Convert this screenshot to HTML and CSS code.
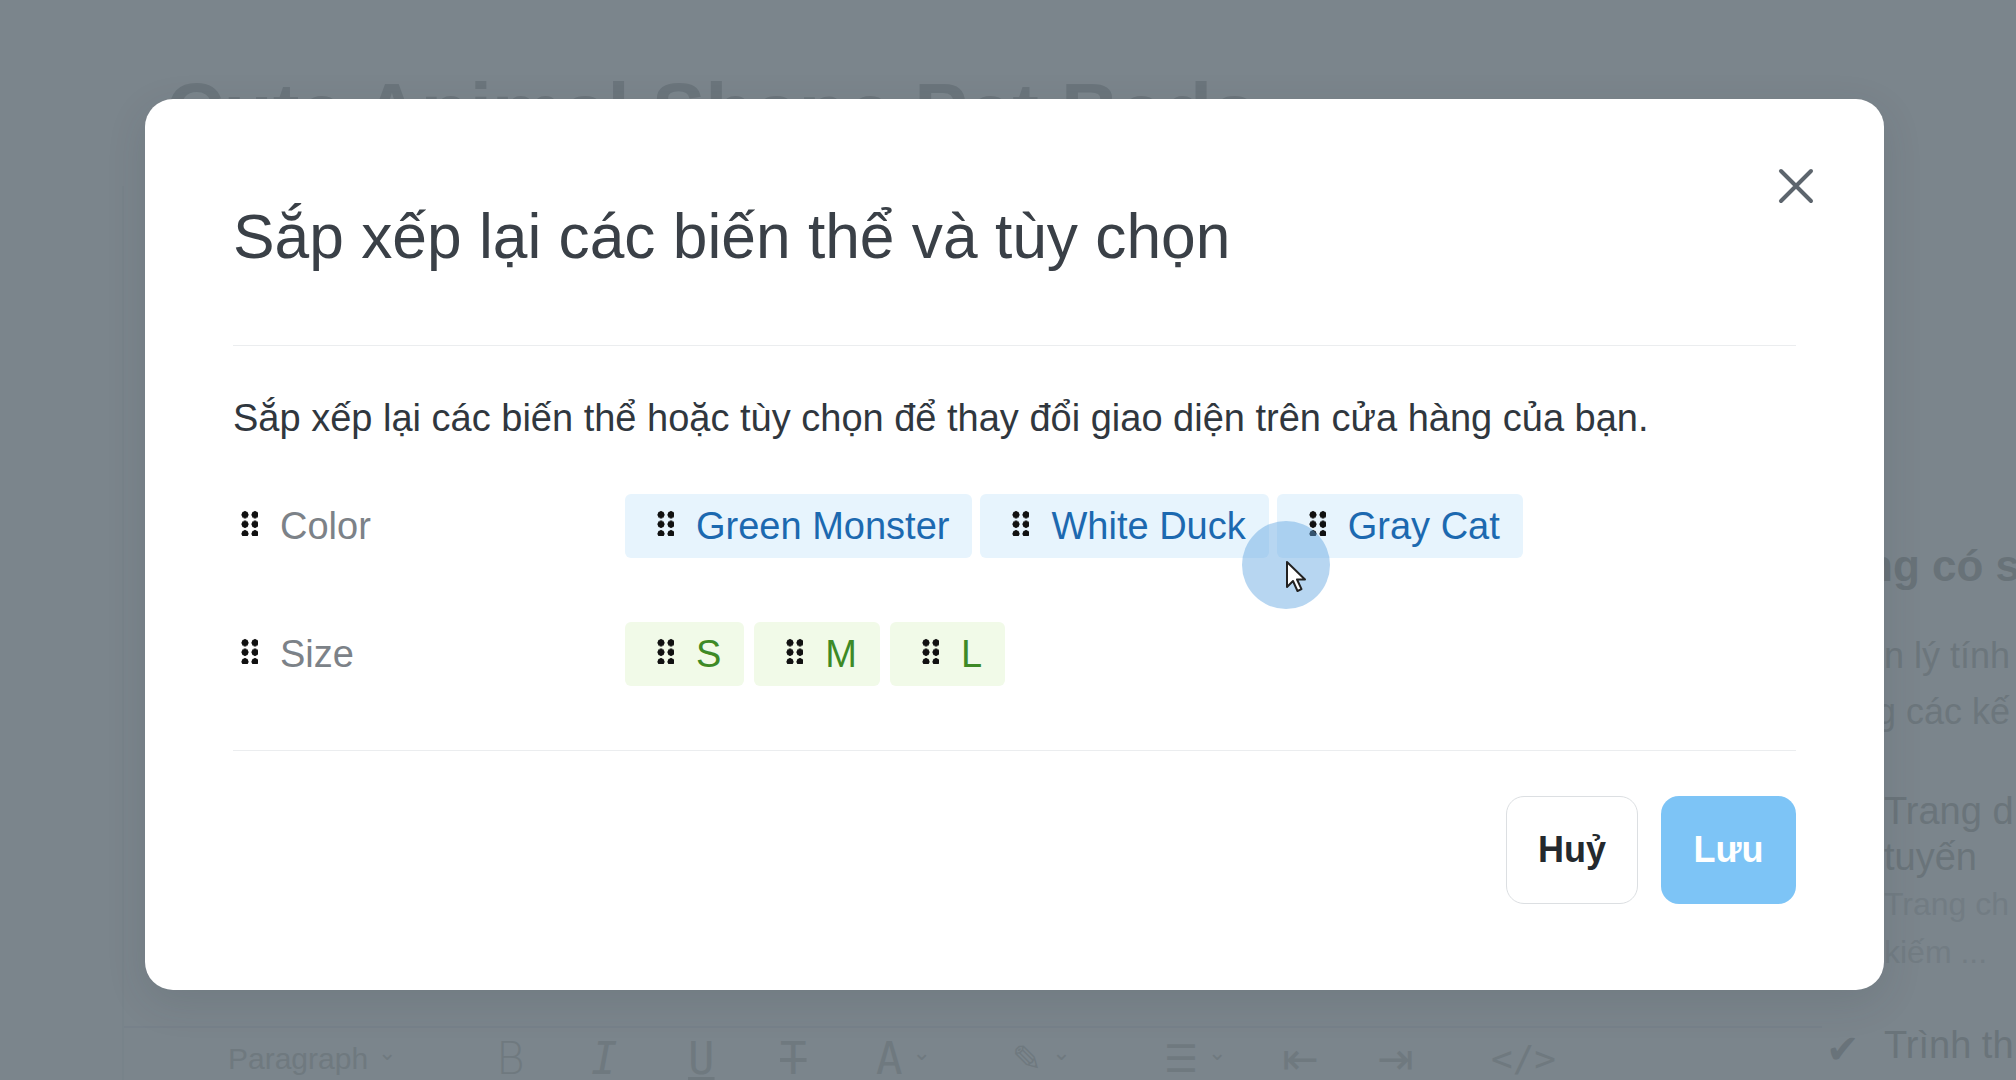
FILE: index.html
```html
<!DOCTYPE html>
<html lang="vi">
<head>
<meta charset="utf-8">
<title>Sắp xếp lại các biến thể và tùy chọn</title>
<link rel="stylesheet" href="styles.css">
</head>
<body>
<div class="page">
  <div class="page-title">Cute Animal Shape Pet Beds</div>
  <div class="page-main">
    <div class="editor-card">
      <div class="toolbar">
        <span class="tb tb-para">Paragraph<span class="chev">⌄</span></span>
        <span class="tb tb-b">B</span>
        <span class="tb tb-it">I</span>
        <span class="tb tb-u">U</span>
        <span class="tb tb-s">T</span>
        <span class="tb tb-a"><span class="ic">A<span class="bar"></span></span><span class="chev">⌄</span></span>
        <span class="tb tb-pen"><span class="ic">✎<span class="bar"></span></span><span class="chev">⌄</span></span>
        <span class="tb tb-al">☰<span class="chev">⌄</span></span>
        <span class="tb tb-out">⇤</span>
        <span class="tb tb-in">⇥</span>
        <span class="tb tb-code">&lt;/&gt;</span>
      </div>
    </div>
    <div class="sidebar">
      <div class="sb-head">ng có s</div>
      <div class="sb-text sb-t1">n lý tính</div>
      <div class="sb-text sb-t2">g các kế</div>
      <div class="sb-item">
        <div class="sb-item-title">Trang d<br>tuyến</div>
        <div class="sb-item-sub">Trang ch<br>kiếm ...</div>
      </div>
      <div class="sb-item sb-item2">
        <span class="sb-check">✔</span>
        <div class="sb-item-title">Trình th</div>
      </div>
    </div>
  </div>
</div>

<div class="modal">
  <button class="close" aria-label="Đóng">
    <svg width="38" height="38" viewBox="0 0 38 38"><path d="M4 4 L34 34 M34 4 L4 34" stroke="#5d656d" stroke-width="4" stroke-linecap="round"/></svg>
  </button>
  <div class="modal-header">
    <h1 class="modal-title">Sắp xếp lại các biến thể và tùy chọn</h1>
  </div>
  <div class="modal-body">
    <p class="desc">Sắp xếp lại các biến thể hoặc tùy chọn để thay đổi giao diện trên cửa hàng của bạn.</p>
    <div class="opt-row">
      <div class="opt-label"><span class="handle"></span>Color</div>
      <div class="chips chips-color">
        <span class="chip chip-blue"><span class="handle"></span>Green Monster</span>
        <span class="chip chip-blue"><span class="handle"></span>White Duck</span>
        <span class="chip chip-blue"><span class="handle"></span>Gray Cat</span>
      </div>
    </div>
    <div class="opt-row">
      <div class="opt-label"><span class="handle"></span>Size</div>
      <div class="chips chips-size">
        <span class="chip chip-green"><span class="handle"></span>S</span>
        <span class="chip chip-green"><span class="handle"></span>M</span>
        <span class="chip chip-green"><span class="handle"></span>L</span>
      </div>
    </div>
  </div>
  <div class="modal-footer">
    <button class="btn btn-cancel">Huỷ</button>
    <button class="btn btn-save">Lưu</button>
  </div>
</div>

<div class="cursor">
  <svg width="24" height="34" viewBox="0 0 24 34"><path d="M2 2 L2 27 L8 21 L12.5 31 L16.5 29.2 L12 19.5 L20 19.5 Z" fill="#fff" stroke="#222" stroke-width="2" stroke-linejoin="round"/></svg>
</div>
</body>
</html>
```

FILE: styles.css
```css
* { box-sizing: border-box; }
html, body {
  margin: 0;
  padding: 0;
}
body {
  width: 2016px;
  height: 1080px;
  overflow: hidden;
  background: #7b858c;
  font-family: "Liberation Sans", Arial, sans-serif;
  position: relative;
}

.page {
  width: 2016px;
  height: 1080px;
  display: flex;
  flex-direction: column;
  color: #6c767d;
  overflow: hidden;
}
.page-title {
  height: 186px;
  flex: none;
  font-size: 80px;
  font-weight: bold;
  line-height: 80px;
  padding: 72px 0 0 166px;
  white-space: nowrap;
  color: #6b757c;
}
.page-main {
  height: 894px;
  flex: none;
  display: flex;
  overflow: hidden;
}
.editor-card {
  width: 1700px;
  flex: none;
  margin-left: 122px;
  display: flex;
  flex-direction: column;
  justify-content: flex-end;
  border-left: 2px solid #78838a;
}
.toolbar {
  display: flex;
  align-items: center;
  padding-left: 104px;
  height: 64px;
  margin-bottom: -10px;
  border-top: 2px solid #77818a;
  font-size: 44px;
  color: #6f797f;
  font-family: "DejaVu Sans Mono", monospace;
  white-space: nowrap;
}
.tb {
  flex: none;
  display: flex;
  align-items: center;
  line-height: 50px;
}
.tb-para {
  width: 268px;
  font-family: "Liberation Sans", Arial, sans-serif;
  font-size: 30px;
}
.tb-b { width: 95px; font-family: "DejaVu Sans", sans-serif; font-weight: 200; }
.tb-it { width: 97px; font-style: italic; }
.tb-u { width: 92px; text-decoration: underline; }
.tb-s { width: 96px; text-decoration: line-through; }
.tb-a { width: 136px; }
.tb-pen { width: 152px; font-family: "DejaVu Sans", sans-serif; font-size: 36px; }
.tb-al { width: 118px; font-family: "DejaVu Sans", sans-serif; font-size: 38px; }
.tb-out { width: 95px; font-family: "DejaVu Sans", sans-serif; }
.tb-in { width: 114px; font-family: "DejaVu Sans", sans-serif; }
.tb-code { font-size: 36px; }
.ic {
  position: relative;
  display: inline-flex;
}
.bar {
  position: absolute;
  left: -2px;
  right: -2px;
  bottom: -16px;
  height: 8px;
  background: #7e6466;
}
.chev {
  font-family: "DejaVu Sans", sans-serif;
  font-size: 22px;
  margin-left: 10px;
  margin-top: -12px;
}

.sidebar {
  margin-left: 54px;
  padding-top: 352px;
  white-space: nowrap;
  display: flex;
  flex-direction: column;
}
.sb-head {
  font-size: 44px;
  font-weight: bold;
  color: #687278;
  line-height: 56px;
  margin-left: -10px;
}
.sb-text {
  font-size: 36px;
  line-height: 56px;
  color: #6c767c;
}
.sb-t1 { margin-top: 34px; margin-left: 8px; }
.sb-t2 { margin-left: 0; }
.sb-item {
  margin-top: 48px;
  margin-left: 8px;
}
.sb-item-title {
  font-size: 38px;
  line-height: 46px;
  color: #6a747a;
}
.sb-item-sub {
  font-size: 32px;
  line-height: 48px;
  color: #727c83;
}
.sb-item2 {
  margin-top: 46px;
  position: relative;
}
.sb-check {
  position: absolute;
  left: -58px;
  top: 4px;
  font-family: "DejaVu Sans", sans-serif;
  font-size: 40px;
  color: #69737a;
}

/* modal */
.modal {
  position: absolute;
  left: 145px;
  top: 99px;
  width: 1739px;
  height: 891px;
  background: #ffffff;
  border-radius: 28px;
  padding: 0 88px;
  display: flex;
  flex-direction: column;
  box-shadow: 0 12px 40px rgba(40, 50, 60, 0.12);
}
.close {
  position: absolute;
  right: 69px;
  top: 68px;
  width: 38px;
  height: 38px;
  padding: 0;
  border: 0;
  background: transparent;
  display: flex;
}
.modal-header {
  padding-top: 102px;
  padding-bottom: 72px;
  border-bottom: 1.5px solid #ebedef;
}
.modal-title {
  margin: 0;
  font-size: 62.3px;
  font-weight: normal;
  line-height: 72px;
  color: #3a4047;
}
.modal-body {
  padding-top: 50px;
  padding-bottom: 64px;
  border-bottom: 1.5px solid #ebedef;
  display: flex;
  flex-direction: column;
  gap: 64px;
}
.desc {
  margin: 0 0 -10px 0;
  font-size: 38px;
  line-height: 44px;
  color: #30373e;
}
.opt-row {
  display: flex;
  align-items: center;
  height: 64px;
}
.opt-label {
  width: 392px;
  display: flex;
  align-items: center;
  gap: 22px;
  padding-left: 8px;
  font-size: 38px;
  color: #7c8288;
}
.handle {
  width: 17px;
  height: 26px;
  flex: none;
  margin-top: -6px;
  background-image: radial-gradient(circle at center, #111 3.3px, transparent 3.8px);
  background-size: 10px 9.5px;
  background-position: -1px 0;
}
.chips {
  display: flex;
  gap: 8px;
}
.chips-size { gap: 10px; }
.chip {
  display: flex;
  align-items: center;
  gap: 22px;
  height: 64px;
  padding: 0 23px 0 32px;
  border-radius: 6px;
  font-size: 38px;
}
.chip-blue {
  background: #e7f4fd;
  color: #1c69b0;
}
.chip-green {
  background: #f1fae8;
  color: #3e8a26;
}
.modal-footer {
  display: flex;
  justify-content: flex-end;
  gap: 23px;
  padding-top: 45px;
}
.btn {
  height: 108px;
  border-radius: 18px;
  font-family: "Liberation Sans", Arial, sans-serif;
  font-size: 36px;
  font-weight: bold;
  padding: 0;
}
.btn-cancel {
  width: 132px;
  background: #ffffff;
  border: 1.5px solid #dcdfe2;
  color: #24292e;
}
.btn-save {
  width: 135px;
  background: #7dc4f6;
  border: 0;
  color: #ffffff;
}

/* pointer with click halo */
.cursor {
  position: absolute;
  left: 1242px;
  top: 521px;
  width: 88px;
  height: 88px;
  border-radius: 50%;
  background: rgba(96, 164, 224, 0.45);
}
.cursor svg {
  position: absolute;
  left: 43px;
  top: 39px;
}
```
